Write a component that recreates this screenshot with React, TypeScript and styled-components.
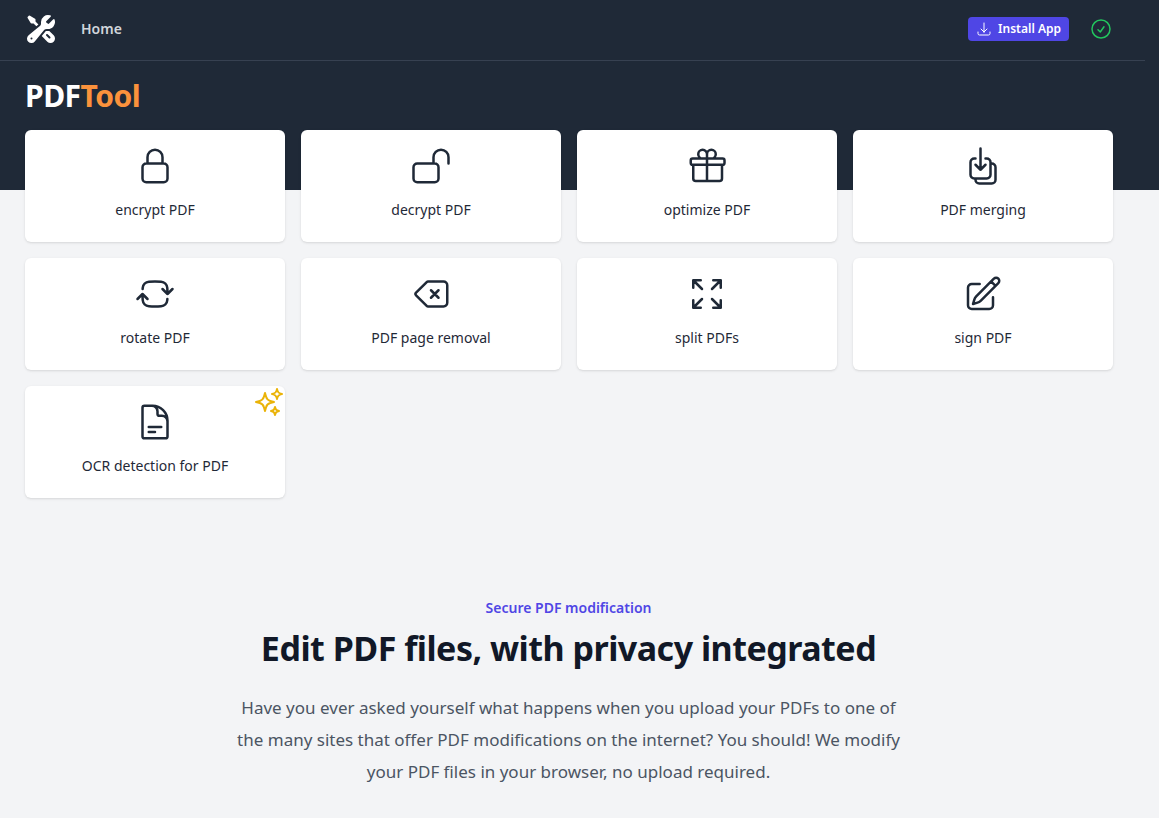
import * as React from 'react';
import styled, { createGlobalStyle } from 'styled-components';
import {
    HiOutlineLockClosed,
    HiOutlineLockOpen,
    HiOutlineGift,
    HiOutlineArrowDownOnSquareStack,
    HiOutlineArrowPathRoundedSquare,
    HiOutlineBackspace,
    HiOutlineArrowsPointingOut,
    HiOutlinePencilSquare,
    HiOutlineDocumentText,
    HiOutlineSparkles,
    HiOutlineArrowDownTray,
    HiOutlineCheckCircle,
    HiWrenchScrewdriver,
} from 'react-icons/hi2';

const GlobalStyle = createGlobalStyle`
html, body {
    margin: 0;
    padding: 0;
    background: #f3f4f6;
    font-family: "Noto Sans", "Open Sans", sans-serif;
}
body {
    height: 818px;
    overflow: hidden;
}
`;

const tools = [
    { label: 'encrypt PDF', icon: HiOutlineLockClosed },
    { label: 'decrypt PDF', icon: HiOutlineLockOpen },
    { label: 'optimize PDF', icon: HiOutlineGift },
    { label: 'PDF merging', icon: HiOutlineArrowDownOnSquareStack },
    { label: 'rotate PDF', icon: HiOutlineArrowPathRoundedSquare },
    { label: 'PDF page removal', icon: HiOutlineBackspace },
    { label: 'split PDFs', icon: HiOutlineArrowsPointingOut },
    { label: 'sign PDF', icon: HiOutlinePencilSquare },
    { label: 'OCR detection for PDF', icon: HiOutlineDocumentText, sparkle: true },
];

export default function App() {
    return (
        <>
            <GlobalStyle />
            <Header>
                <Nav>
                    <NavLeft>
                        <Logo><HiWrenchScrewdriver size={32} /></Logo>
                        <NavLink>Home</NavLink>
                    </NavLeft>
                    <NavRight>
                        <InstallButton>
                            <HiOutlineArrowDownTray size={16} />
                            Install App
                        </InstallButton>
                        <Status><HiOutlineCheckCircle size={24} /></Status>
                    </NavRight>
                </Nav>
                <Title>PDF<TitleAccent>Tool</TitleAccent></Title>
            </Header>
            <Grid>
                {tools.map(tool => (
                    <Card key={tool.label}>
                        <CardIcon><tool.icon size={40} /></CardIcon>
                        <CardLabel>{tool.label}</CardLabel>
                        {tool.sparkle && <Sparkle><HiOutlineSparkles size={32} /></Sparkle>}
                    </Card>
                ))}
            </Grid>
            <Intro>
                <Eyebrow>Secure PDF modification</Eyebrow>
                <Headline>Edit PDF files, with privacy integrated</Headline>
                <Lead>
                    Have you ever asked yourself what happens when you upload your PDFs to one of
                    the many sites that offer PDF modifications on the internet? You should! We modify
                    your PDF files in your browser, no upload required.
                </Lead>
            </Intro>
        </>
    );
}

const Header = styled.header`
background: #1f2937;
height: 190px;
`;

const Nav = styled.nav`
display: flex;
align-items: center;
justify-content: space-between;
width: 1145px;
height: 61px;
box-sizing: border-box;
padding: 0 32px 3px 25px;
border-bottom: 1px solid #374151;
`;

const NavLeft = styled.div`
display: flex;
align-items: center;
gap: 24px;
`;

const Logo = styled.div`
display: flex;
color: #fff;
`;

const NavLink = styled.a`
font-size: 14px;
font-weight: 600;
color: #d1d5db;
`;

const NavRight = styled.div`
display: flex;
align-items: center;
gap: 20px;
`;

const InstallButton = styled.button`
display: flex;
align-items: center;
gap: 6px;
height: 24px;
padding: 0 8px;
border: 0;
border-radius: 4px;
background: #4f46e5;
color: #fff;
font-family: inherit;
font-size: 12px;
font-weight: 600;
`;

const Status = styled.div`
display: flex;
color: #22c55e;
`;

const Title = styled.h1`
margin: 16px 0 0 25px;
font-size: 30px;
line-height: 38px;
font-weight: 700;
color: #fff;
letter-spacing: -0.5px;
`;

const TitleAccent = styled.span`
color: #fb923c;
`;

const Grid = styled.main`
display: grid;
grid-template-columns: repeat(4, 260px);
gap: 16px;
margin: -60px 0 0 25px;
`;

const Card = styled.div`
position: relative;
display: flex;
flex-direction: column;
align-items: center;
height: 112px;
box-sizing: border-box;
padding-top: 16px;
background: #fff;
border-radius: 6px;
box-shadow: 0 1px 3px 0 rgba(0, 0, 0, 0.1), 0 1px 2px -1px rgba(0, 0, 0, 0.1);
`;

const CardIcon = styled.div`
display: flex;
color: #1f2937;
`;

const CardLabel = styled.div`
margin-top: 14px;
font-size: 14px;
line-height: 20px;
color: #1f2937;
`;

const Sparkle = styled.div`
position: absolute;
top: 0;
right: 0;
display: flex;
color: #eab308;
fill: #fef08a;
`;

const Intro = styled.section`
display: flex;
flex-direction: column;
align-items: center;
margin-top: 98px;
width: 1137px;
text-align: center;
`;

const Eyebrow = styled.div`
font-size: 14px;
line-height: 24px;
font-weight: 600;
color: #4f46e5;
`;

const Headline = styled.h2`
margin: 8px 0 0;
font-size: 34px;
line-height: 40px;
font-weight: 700;
color: #111827;
letter-spacing: -0.5px;
`;

const Lead = styled.p`
margin: 24px 0 0;
max-width: 672px;
font-size: 17px;
line-height: 32px;
color: #4b5563;
`;
